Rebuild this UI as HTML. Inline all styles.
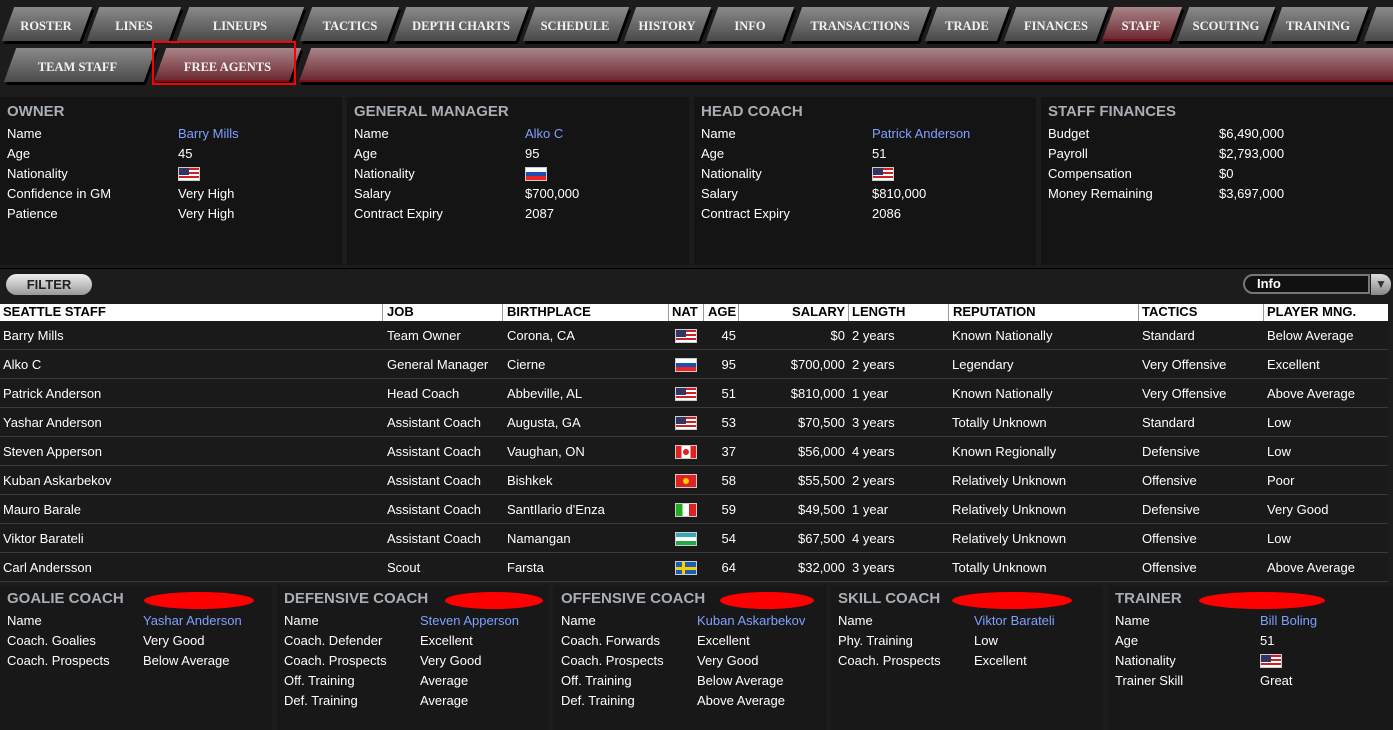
<!DOCTYPE html>
<html><head><meta charset="utf-8"><style>
*{margin:0;padding:0;box-sizing:border-box}
body{width:1393px;height:730px;overflow:hidden;background:#1c1c1c;font-family:"Liberation Sans",sans-serif;color:#fff;font-size:13px;position:relative}
.tab{position:absolute;height:34px;transform:skewX(-20deg);background:linear-gradient(#8a8a8a,#4a4a4a);box-shadow:3px 3px 0 #000}
.tab.r{background:linear-gradient(#a88488,#6e2a32);border-bottom:2px solid #7a0f18}
.tl{position:absolute;height:34px;line-height:38px;text-align:center;font-family:"Liberation Serif",serif;font-weight:bold;font-size:12.5px;color:#f2f2f2}
.sec{position:absolute;top:97px;height:168px;background:#141414}
.sec h3,.bp h3{font-size:15px;color:#a8aeb4;font-weight:bold;position:absolute;top:6px;left:7px}
.kv{position:absolute;left:7px;top:27px;line-height:20px;font-size:13px}
.kv2{position:absolute;top:27px;line-height:20px;font-size:13px}
.b{color:#7ea0ff}
.hdr{position:absolute;top:304px;left:0;width:1388px;height:17px;background:#fff;color:#000;font-size:13px;font-weight:bold}
.hdr span,.row span{position:absolute;white-space:nowrap}
.hdr i{position:absolute;top:0;width:1px;height:17px;background:#999}
.row{position:absolute;left:0;width:1388px;height:29px;line-height:29px;border-bottom:1px solid #3a3a3a;background:#1a1a1a}
.f{position:absolute;top:8px;left:675px;width:22px;height:14px;border:1px solid #ccc}
.bp{position:absolute;top:585px;height:145px;background:#181818}
.bp h3{top:5px}
.bp .kv,.bp .kv2{top:26px}
.el{position:absolute;top:7px;height:17px;border-radius:50%;background:#f00}
</style></head><body>
<div class="tab" style="left:8px;top:7px;width:78px"></div><div class="tl" style="left:4px;top:7px;width:84px">ROSTER</div>
<div class="tab" style="left:93px;top:7px;width:82px"></div><div class="tl" style="left:90px;top:7px;width:88px">LINES</div>
<div class="tab" style="left:183px;top:7px;width:115px"></div><div class="tl" style="left:180px;top:7px;width:120px">LINEUPS</div>
<div class="tab" style="left:306px;top:7px;width:87px"></div><div class="tl" style="left:304px;top:7px;width:92px">TACTICS</div>
<div class="tab" style="left:400px;top:7px;width:122px"></div><div class="tl" style="left:398px;top:7px;width:126px">DEPTH CHARTS</div>
<div class="tab" style="left:529px;top:7px;width:94px"></div><div class="tl" style="left:527px;top:7px;width:96px">SCHEDULE</div>
<div class="tab" style="left:630px;top:7px;width:75px"></div><div class="tl" style="left:628px;top:7px;width:78px">HISTORY</div>
<div class="tab" style="left:712px;top:7px;width:76px"></div><div class="tl" style="left:710px;top:7px;width:80px">INFO</div>
<div class="tab" style="left:796px;top:7px;width:128px"></div><div class="tl" style="left:794px;top:7px;width:132px">TRANSACTIONS</div>
<div class="tab" style="left:931px;top:7px;width:72px"></div><div class="tl" style="left:929px;top:7px;width:76px">TRADE</div>
<div class="tab" style="left:1010px;top:7px;width:92px"></div><div class="tl" style="left:1008px;top:7px;width:96px">FINANCES</div>
<div class="tab r" style="left:1108px;top:7px;width:68px"></div><div class="tl" style="left:1105px;top:7px;width:72px">STAFF</div>
<div class="tab" style="left:1183px;top:7px;width:86px"></div><div class="tl" style="left:1180px;top:7px;width:92px">SCOUTING</div>
<div class="tab" style="left:1276px;top:7px;width:86px"></div><div class="tl" style="left:1272px;top:7px;width:92px">TRAINING</div>
<div class="tab" style="left:1370px;top:7px;width:40px"></div>
<div class="tab" style="left:10px;top:48px;width:140px"></div><div class="tl" style="left:5px;top:48px;width:145px">TEAM STAFF</div>
<div class="tab r" style="left:160px;top:48px;width:135px"></div><div class="tl" style="left:155px;top:48px;width:145px">FREE AGENTS</div>
<div class="tab r" style="left:305px;top:48px;width:1110px"></div>
<div style="position:absolute;left:152px;top:41px;width:144px;height:44px;border:2px solid #f00"></div>
<div class="sec" style="left:0;width:342px"><h3>OWNER</h3>
<div class="kv">Name<br>Age<br>Nationality<br>Confidence in GM<br>Patience</div>
<div class="kv2" style="left:178px"><span class="b">Barry Mills</span><br>45<br><div class="f" style="position:relative;top:3px;left:0;display:inline-block;background:repeating-linear-gradient(#c22 0 2px,#fff 2px 4px)"><div style="width:10px;height:7px;background:#336"></div></div><br>Very High<br>Very High</div></div>
<div class="sec" style="left:347px;width:342px"><h3>GENERAL MANAGER</h3>
<div class="kv">Name<br>Age<br>Nationality<br>Salary<br>Contract Expiry</div>
<div class="kv2" style="left:178px"><span class="b">Alko C</span><br>95<br><div class="f" style="position:relative;top:3px;left:0;display:inline-block;background:linear-gradient(#fff 33%,#1a4fb0 33% 66%,#e22 66%)"></div><br>$700,000<br>2087</div></div>
<div class="sec" style="left:694px;width:342px"><h3>HEAD COACH</h3>
<div class="kv">Name<br>Age<br>Nationality<br>Salary<br>Contract Expiry</div>
<div class="kv2" style="left:178px"><span class="b">Patrick Anderson</span><br>51<br><div class="f" style="position:relative;top:3px;left:0;display:inline-block;background:repeating-linear-gradient(#c22 0 2px,#fff 2px 4px)"><div style="width:10px;height:7px;background:#336"></div></div><br>$810,000<br>2086</div></div>
<div class="sec" style="left:1041px;width:352px"><h3>STAFF FINANCES</h3>
<div class="kv">Budget<br>Payroll<br>Compensation<br>Money Remaining</div>
<div class="kv2" style="left:178px">$6,490,000<br>$2,793,000<br>$0<br>$3,697,000</div></div>
<div style="position:absolute;left:0;top:268px;width:1393px;height:1px;background:#000"></div>
<div style="position:absolute;left:6px;top:274px;width:86px;height:21px;border-radius:11px;background:linear-gradient(#eee,#999);color:#222;font-weight:bold;font-size:13px;text-align:center;line-height:21px">FILTER</div>
<div style="position:absolute;left:1243px;top:274px;width:127px;height:20px;border:2px solid #777;border-radius:10px 0 0 10px;background:#111;font-size:13px;font-weight:bold;padding-left:12px;line-height:16px">Info</div>
<div style="position:absolute;left:1371px;top:274px;width:20px;height:21px;border-radius:0 10px 10px 0;background:linear-gradient(#ddd,#888);color:#333;text-align:center;font-size:12px;line-height:21px">▼</div>
<div class="hdr"><span style="left:3px">SEATTLE STAFF</span><i style="left:382px"></i><span style="left:387px">JOB</span><i style="left:502px"></i><span style="left:507px">BIRTHPLACE</span><i style="left:668px"></i><span style="left:672px">NAT</span><i style="left:703px"></i><span style="left:708px">AGE</span><i style="left:738px"></i><span style="right:543px">SALARY</span><i style="left:848px"></i><span style="left:852px">LENGTH</span><i style="left:948px"></i><span style="left:953px">REPUTATION</span><i style="left:1138px"></i><span style="left:1142px">TACTICS</span><i style="left:1263px"></i><span style="left:1267px">PLAYER MNG.</span></div>
<div class="row" style="top:321px"><span style="left:3px">Barry Mills</span><span style="left:387px">Team Owner</span><span style="left:507px">Corona, CA</span><div class="f" style="background:repeating-linear-gradient(#c22 0 2px,#fff 2px 4px)"><div style="width:10px;height:7px;background:#336"></div></div><span style="right:652px">45</span><span style="right:543px">$0</span><span style="left:852px">2 years</span><span style="left:952px">Known Nationally</span><span style="left:1142px">Standard</span><span style="left:1267px">Below Average</span></div>
<div class="row" style="top:350px"><span style="left:3px">Alko C</span><span style="left:387px">General Manager</span><span style="left:507px">Cierne</span><div class="f" style="background:linear-gradient(#fff 33%,#1a4fb0 33% 66%,#e22 66%)"></div><span style="right:652px">95</span><span style="right:543px">$700,000</span><span style="left:852px">2 years</span><span style="left:952px">Legendary</span><span style="left:1142px">Very Offensive</span><span style="left:1267px">Excellent</span></div>
<div class="row" style="top:379px"><span style="left:3px">Patrick Anderson</span><span style="left:387px">Head Coach</span><span style="left:507px">Abbeville, AL</span><div class="f" style="background:repeating-linear-gradient(#c22 0 2px,#fff 2px 4px)"><div style="width:10px;height:7px;background:#336"></div></div><span style="right:652px">51</span><span style="right:543px">$810,000</span><span style="left:852px">1 year</span><span style="left:952px">Known Nationally</span><span style="left:1142px">Very Offensive</span><span style="left:1267px">Above Average</span></div>
<div class="row" style="top:408px"><span style="left:3px">Yashar Anderson</span><span style="left:387px">Assistant Coach</span><span style="left:507px">Augusta, GA</span><div class="f" style="background:repeating-linear-gradient(#c22 0 2px,#fff 2px 4px)"><div style="width:10px;height:7px;background:#336"></div></div><span style="right:652px">53</span><span style="right:543px">$70,500</span><span style="left:852px">3 years</span><span style="left:952px">Totally Unknown</span><span style="left:1142px">Standard</span><span style="left:1267px">Low</span></div>
<div class="row" style="top:437px"><span style="left:3px">Steven Apperson</span><span style="left:387px">Assistant Coach</span><span style="left:507px">Vaughan, ON</span><div class="f" style="background:linear-gradient(90deg,#d22 28%,#fff 28% 72%,#d22 72%)"><div style="width:6px;height:6px;margin:3px 7px;background:#d22;border-radius:50%"></div></div><span style="right:652px">37</span><span style="right:543px">$56,000</span><span style="left:852px">4 years</span><span style="left:952px">Known Regionally</span><span style="left:1142px">Defensive</span><span style="left:1267px">Low</span></div>
<div class="row" style="top:466px"><span style="left:3px">Kuban Askarbekov</span><span style="left:387px">Assistant Coach</span><span style="left:507px">Bishkek</span><div class="f" style="background:#d22"><div style="width:6px;height:6px;margin:3px 7px;background:#fc0;border-radius:50%"></div></div><span style="right:652px">58</span><span style="right:543px">$55,500</span><span style="left:852px">2 years</span><span style="left:952px">Relatively Unknown</span><span style="left:1142px">Offensive</span><span style="left:1267px">Poor</span></div>
<div class="row" style="top:495px"><span style="left:3px">Mauro Barale</span><span style="left:387px">Assistant Coach</span><span style="left:507px">SantIlario d'Enza</span><div class="f" style="background:linear-gradient(90deg,#2a2 33%,#fff 33% 66%,#d22 66%)"></div><span style="right:652px">59</span><span style="right:543px">$49,500</span><span style="left:852px">1 year</span><span style="left:952px">Relatively Unknown</span><span style="left:1142px">Defensive</span><span style="left:1267px">Very Good</span></div>
<div class="row" style="top:524px"><span style="left:3px">Viktor Barateli</span><span style="left:387px">Assistant Coach</span><span style="left:507px">Namangan</span><div class="f" style="background:linear-gradient(#3ab 33%,#fff 33% 66%,#2a4 66%)"></div><span style="right:652px">54</span><span style="right:543px">$67,500</span><span style="left:852px">4 years</span><span style="left:952px">Relatively Unknown</span><span style="left:1142px">Offensive</span><span style="left:1267px">Low</span></div>
<div class="row" style="top:553px"><span style="left:3px">Carl Andersson</span><span style="left:387px">Scout</span><span style="left:507px">Farsta</span><div class="f" style="background:linear-gradient(#fc0,#fc0) 6px 0/3px 100% no-repeat,linear-gradient(#fc0,#fc0) 0 5px/100% 3px no-repeat,#1a5fb0"></div><span style="right:652px">64</span><span style="right:543px">$32,000</span><span style="left:852px">3 years</span><span style="left:952px">Totally Unknown</span><span style="left:1142px">Offensive</span><span style="left:1267px">Above Average</span></div>
<div class="bp" style="left:0;width:272px"><h3>GOALIE COACH</h3><div class="el" style="left:144px;width:110px"></div>
<div class="kv">Name<br>Coach. Goalies<br>Coach. Prospects</div><div class="kv2" style="left:143px"><span class="b">Yashar Anderson</span><br>Very Good<br>Below Average</div></div>
<div class="bp" style="left:277px;width:272px"><h3>DEFENSIVE COACH</h3><div class="el" style="left:168px;width:98px"></div>
<div class="kv">Name<br>Coach. Defender<br>Coach. Prospects<br>Off. Training<br>Def. Training</div><div class="kv2" style="left:143px"><span class="b">Steven Apperson</span><br>Excellent<br>Very Good<br>Average<br>Average</div></div>
<div class="bp" style="left:554px;width:272px"><h3>OFFENSIVE COACH</h3><div class="el" style="left:166px;width:94px"></div>
<div class="kv">Name<br>Coach. Forwards<br>Coach. Prospects<br>Off. Training<br>Def. Training</div><div class="kv2" style="left:143px"><span class="b">Kuban Askarbekov</span><br>Excellent<br>Very Good<br>Below Average<br>Above Average</div></div>
<div class="bp" style="left:831px;width:272px"><h3>SKILL COACH</h3><div class="el" style="left:121px;width:120px"></div>
<div class="kv">Name<br>Phy. Training<br>Coach. Prospects</div><div class="kv2" style="left:143px"><span class="b">Viktor Barateli</span><br>Low<br>Excellent</div></div>
<div class="bp" style="left:1108px;width:285px"><h3>TRAINER</h3><div class="el" style="left:91px;width:126px"></div>
<div class="kv">Name<br>Age<br>Nationality<br>Trainer Skill</div><div class="kv2" style="left:152px"><span class="b">Bill Boling</span><br>51<br><div class="f" style="position:relative;top:3px;left:0;display:inline-block;background:repeating-linear-gradient(#c22 0 2px,#fff 2px 4px)"><div style="width:10px;height:7px;background:#336"></div></div><br>Great</div></div>
</body></html>
